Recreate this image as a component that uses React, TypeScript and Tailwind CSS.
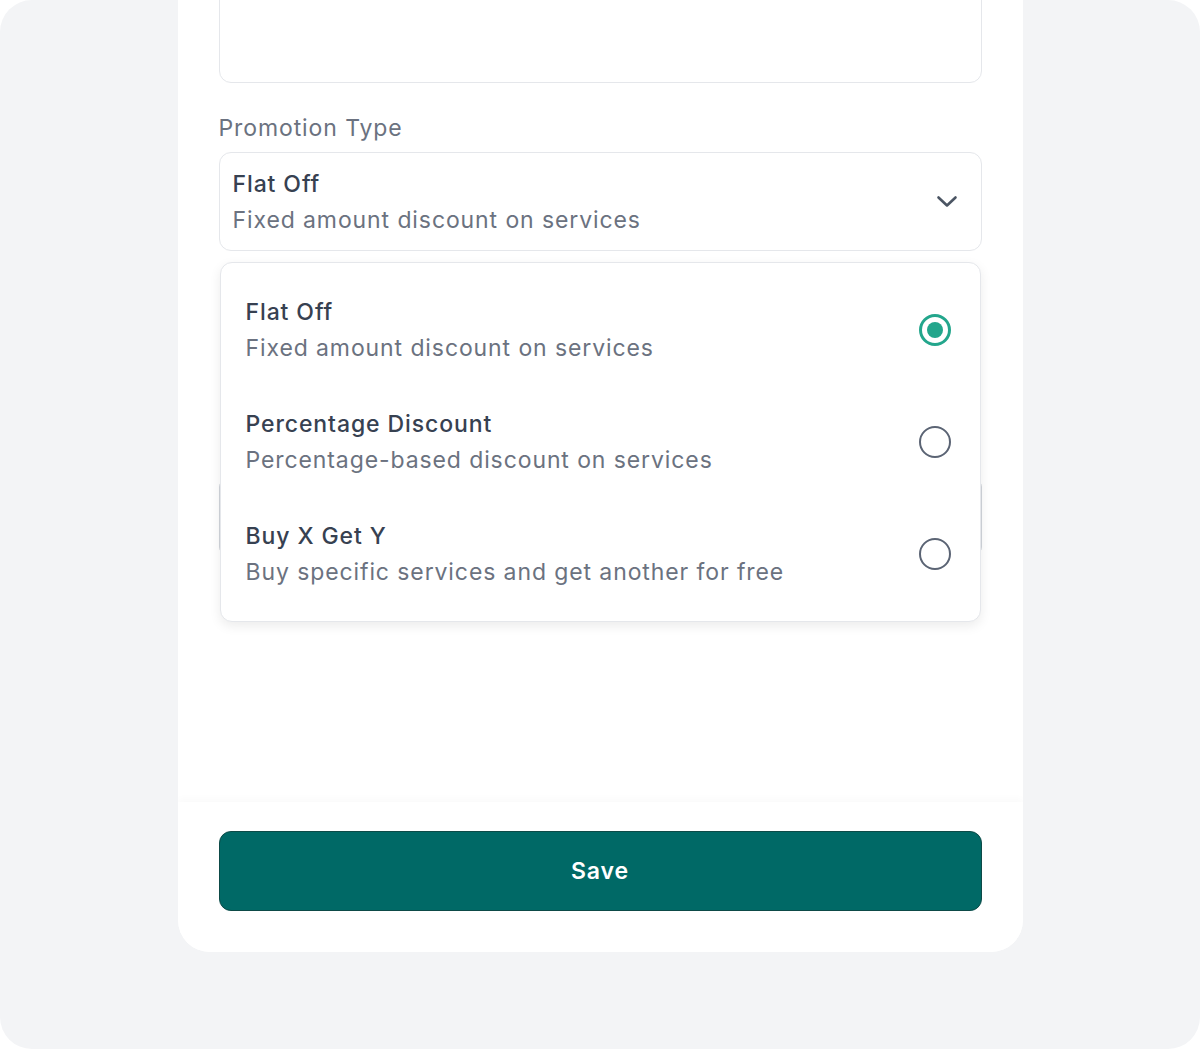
import React from "react";

const options = [
  { title: "Flat Off", sub: "Fixed amount discount on services", selected: true },
  { title: "Percentage Discount", sub: "Percentage-based discount on services", selected: false },
  { title: "Buy X Get Y", sub: "Buy specific services and get another for free", selected: false },
];

export default function App() {
  return (
    <div className="w-full bg-white tracking-[0.9px]" style={{ fontFamily: 'Inter, "Noto Sans", sans-serif' }}>
      <div className="h-[1049px] w-full rounded-[32px] bg-[#f3f4f6] flex justify-center">
        <div className="w-[845px] h-[952px] bg-white rounded-b-[32px] overflow-hidden flex flex-col">
          <div className="flex-1 px-[41px] flex flex-col">
            <div className="-mt-[20px] h-[103px] rounded-xl border border-[#e5e7eb] shrink-0" />
            <div className="mt-[29px] text-[23px] leading-[33px] text-[#6b7280]">Promotion Type</div>
            <div className="relative mt-[7px]">
              <div className="h-[99px] rounded-xl border border-[#e5e7eb] pl-[13px] pr-[23px] flex items-center justify-between">
                <div className="flex flex-col mt-[1px]">
                  <span className="text-[23px] leading-[36px] font-medium text-[#374151]">Flat Off</span>
                  <span className="text-[23px] leading-[36px] text-[#6b7280]">Fixed amount discount on services</span>
                </div>
                <svg width="22" height="14" viewBox="0 0 22 14" fill="none">
                  <path d="M2.5 2.5L11 10.5L19.5 2.5" stroke="#4b5563" strokeWidth="2.6" strokeLinecap="round" strokeLinejoin="round" />
                </svg>
              </div>
              <div className="mt-[228px] h-[76px] rounded-lg border border-[#d1d5db]" />
              <div className="absolute left-[1px] right-[1px] top-[110px] z-10 bg-white rounded-xl border border-[#e5e7eb] shadow-[0_4px_12px_rgba(0,0,0,0.08)] py-[11px]">
                {options.map((o) => (
                  <div key={o.title} className="h-[112px] pl-[25px] pr-[29px] flex items-center justify-between">
                    <div className="flex flex-col -mt-[1px]">
                      <span className="text-[23px] leading-[36px] font-medium text-[#374151]">{o.title}</span>
                      <span className="text-[23px] leading-[36px] text-[#6b7280]">{o.sub}</span>
                    </div>
                    {o.selected ? (
                      <div className="w-[32px] h-[32px] rounded-full border-[3px] border-[#23a68c] flex items-center justify-center">
                        <div className="w-[16px] h-[16px] rounded-full bg-[#23a68c]" />
                      </div>
                    ) : (
                      <div className="w-[32px] h-[32px] rounded-full border-[2.5px] border-[#5b6474]" />
                    )}
                  </div>
                ))}
              </div>
            </div>
          </div>
          <div className="h-[150px] shrink-0 px-[41px] pt-[29px] shadow-[0_-3px_8px_rgba(0,0,0,0.025)] bg-white relative">
            <button className="w-full h-[80px] rounded-xl bg-[#006966] border border-[#0d4a47] text-white text-[23px] font-semibold">
              Save
            </button>
          </div>
        </div>
      </div>
    </div>
  );
}
